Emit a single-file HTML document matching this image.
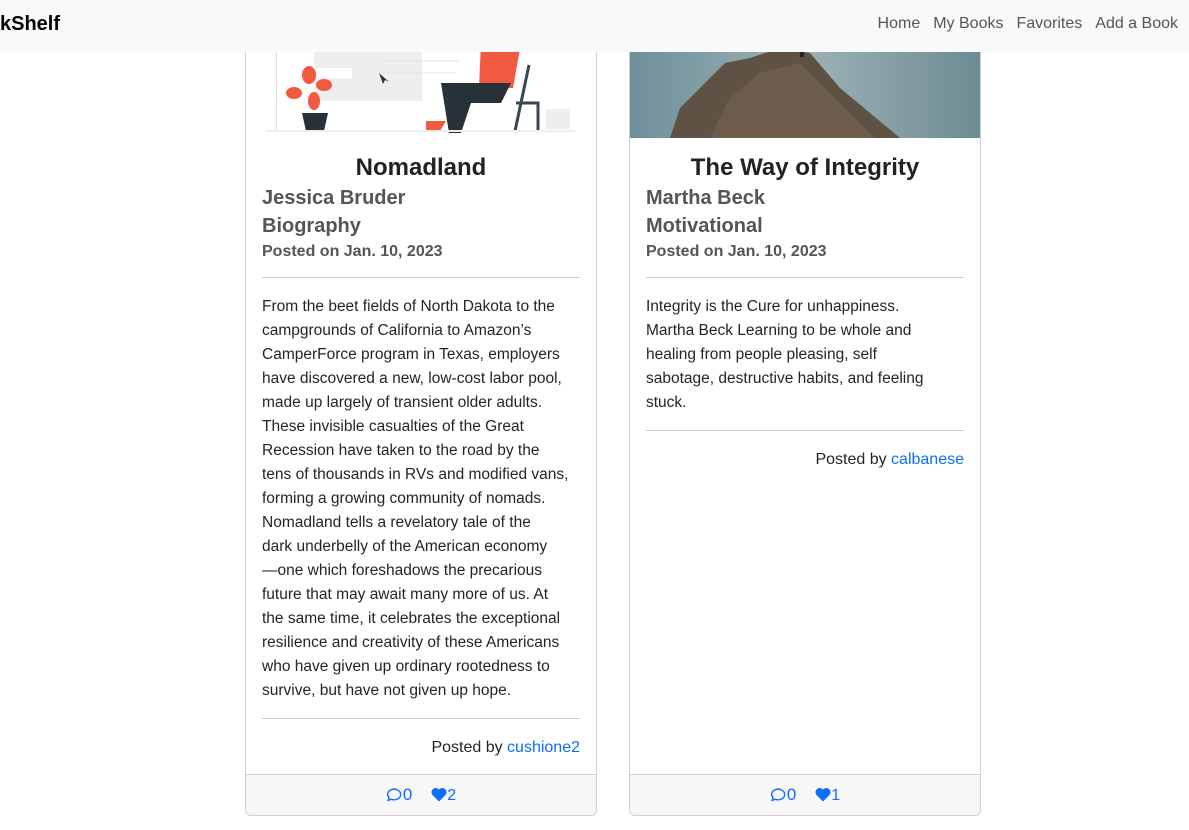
<!DOCTYPE html>
<html><head><meta charset="utf-8"><style>
*{box-sizing:border-box;margin:0;padding:0}
body{width:1189px;height:830px;overflow:hidden;background:#fff;font-family:"Liberation Sans",sans-serif;color:#212529;position:relative}
.nav{position:absolute;left:0;top:0;width:1189px;height:52px;background:#f8f9fa;z-index:5}
.brand{position:absolute;left:0;top:13px;font-size:20px;color:#000;font-weight:bold}
.links{position:absolute;right:11px;top:15px;font-size:16px;color:#555}
.links span{margin-left:13px}
.card{position:absolute;top:-10px;width:352px;height:826px;border:1px solid #d0d0d0;border-radius:6px;overflow:hidden}
.foot{position:absolute;left:0;right:0;bottom:0;height:41px;background:#f7f7f7;border-top:1px solid #d0d0d0;text-align:center;font-size:17px;color:#0d6efd;line-height:40px}
.foot svg{vertical-align:-2px}
.a{position:absolute;white-space:nowrap}
.t{left:0;right:0;text-align:center;font-size:24px;color:#222;font-weight:bold}
.au{left:16px;font-size:20px;color:#555;font-weight:bold}
.po{left:16px;font-size:16px;font-weight:bold;color:#555}
.hr{position:absolute;left:16px;right:16px;height:1px;background:#ccc}
.body{left:16px;font-size:15.5px;line-height:24px;color:#212529}
.pb{right:16px;font-size:16px}
.pb b{font-weight:normal;color:#0d6efd}
</style></head><body>
<div class="nav"><div class="brand">kShelf</div><div class="links"><span>Home</span><span>My Books</span><span>Favorites</span><span>Add a Book</span></div></div>

<div class="card" style="left:245px">
<svg class="a" style="left:20px;top:52px" width="320" height="90">
<rect x="10" y="0" width="1" height="88" fill="#ddd"/>
<rect x="48" y="0" width="108" height="58" fill="#eee"/>
<rect x="50" y="25" width="36" height="10" fill="#fff"/>
<path d="M113 30l4 11 2-4 4 2z" fill="#333"/>
<line x1="115" y1="18" x2="195" y2="18" stroke="#e4e4e4"/><line x1="115" y1="30" x2="190" y2="30" stroke="#e4e4e4"/>
<ellipse cx="43" cy="32" rx="7" ry="9" fill="#f15a40"/><ellipse cx="58" cy="42" rx="8" ry="6" fill="#f15a40"/><ellipse cx="28" cy="50" rx="8" ry="6" fill="#f15a40"/><ellipse cx="48" cy="58" rx="6" ry="9" fill="#f15a40"/>
<path d="M36 70h26l-4 18h-18z" fill="#263238"/>
<path d="M215 0h40l-8 45h-34z" fill="#f15a40"/>
<path d="M175 40h70l-10 20h-30l-10 30h-12z" fill="#263238"/>
<path d="M160 78h20l-6 10h-14z" fill="#f15a40"/>
<path d="M263 22l-14 66M250 60h22v28" stroke="#37474f" stroke-width="3" fill="none"/>
<rect x="280" y="66" width="24" height="20" fill="#eee"/>
<rect x="0" y="87" width="310" height="2" fill="#eee"/>
</svg>
<div class="a t" style="top:163px">Nomadland</div>
<div class="a au" style="top:196px">Jessica Bruder</div>
<div class="a au" style="top:224px">Biography</div>
<div class="a po" style="top:252px">Posted on Jan. 10, 2023</div>
<div class="hr" style="top:286px"></div>
<div class="a body" style="top:304px">From the beet fields of North Dakota to the<br>campgrounds of California to Amazon’s<br>CamperForce program in Texas, employers<br>have discovered a new, low-cost labor pool,<br>made up largely of transient older adults.<br>These invisible casualties of the Great<br>Recession have taken to the road by the<br>tens of thousands in RVs and modified vans,<br>forming a growing community of nomads.<br>Nomadland tells a revelatory tale of the<br>dark underbelly of the American economy<br>—one which foreshadows the precarious<br>future that may await many more of us. At<br>the same time, it celebrates the exceptional<br>resilience and creativity of these Americans<br>who have given up ordinary rootedness to<br>survive, but have not given up hope.</div>
<div class="hr" style="top:727px"></div>
<div class="a pb" style="top:748px">Posted by <b>cushione2</b></div>
<div class="foot"><svg width="17" height="16" viewBox="0 0 16 16"><path d="M2.7 11.9A6.5 5.3 0 1 1 5 13.3L1.5 14.5z" fill="none" stroke="#0d6efd" stroke-width="1.4" stroke-linejoin="round"/></svg>0 &nbsp; &nbsp;<svg width="16" height="15" viewBox="0 0 16 15"><path d="M8 14.5L1.5 8A4 4 0 0 1 8 2.5 4 4 0 0 1 14.5 8z" fill="#0d6efd"/></svg><span style="font-size:16px">2</span></div>
</div>

<div class="card" style="left:629px">
<svg class="a" style="left:0;top:0" width="352" height="147">
<defs><linearGradient id="g" x1="0" y1="0" x2="1" y2="0"><stop offset="0" stop-color="#6f8f99"/><stop offset="0.5" stop-color="#9db2b6"/><stop offset="1" stop-color="#6d8a92"/></linearGradient></defs>
<rect width="352" height="147" fill="url(#g)"/>
<path d="M40 147l10-30 25-25 20-20 25-5 30-10 30 5 30 35 60 50z" fill="#5e5245"/>
<path d="M80 147l20-40 30-25 40-10 25 25 50 50z" fill="#6d5c4c"/>
<rect x="170" y="50" width="4" height="16" fill="#222"/>
</svg>
<div class="a t" style="top:163px">The Way of Integrity</div>
<div class="a au" style="top:196px">Martha Beck</div>
<div class="a au" style="top:224px">Motivational</div>
<div class="a po" style="top:252px">Posted on Jan. 10, 2023</div>
<div class="hr" style="top:286px"></div>
<div class="a body" style="top:304px">Integrity is the Cure for unhappiness.<br>Martha Beck Learning to be whole and<br>healing from people pleasing, self<br>sabotage, destructive habits, and feeling<br>stuck.</div>
<div class="hr" style="top:439px"></div>
<div class="a pb" style="top:460px">Posted by <b>calbanese</b></div>
<div class="foot"><svg width="17" height="16" viewBox="0 0 16 16"><path d="M2.7 11.9A6.5 5.3 0 1 1 5 13.3L1.5 14.5z" fill="none" stroke="#0d6efd" stroke-width="1.4" stroke-linejoin="round"/></svg>0 &nbsp; &nbsp;<svg width="16" height="15" viewBox="0 0 16 15"><path d="M8 14.5L1.5 8A4 4 0 0 1 8 2.5 4 4 0 0 1 14.5 8z" fill="#0d6efd"/></svg><span style="font-size:16px">1</span></div>
</div>
</body></html>
